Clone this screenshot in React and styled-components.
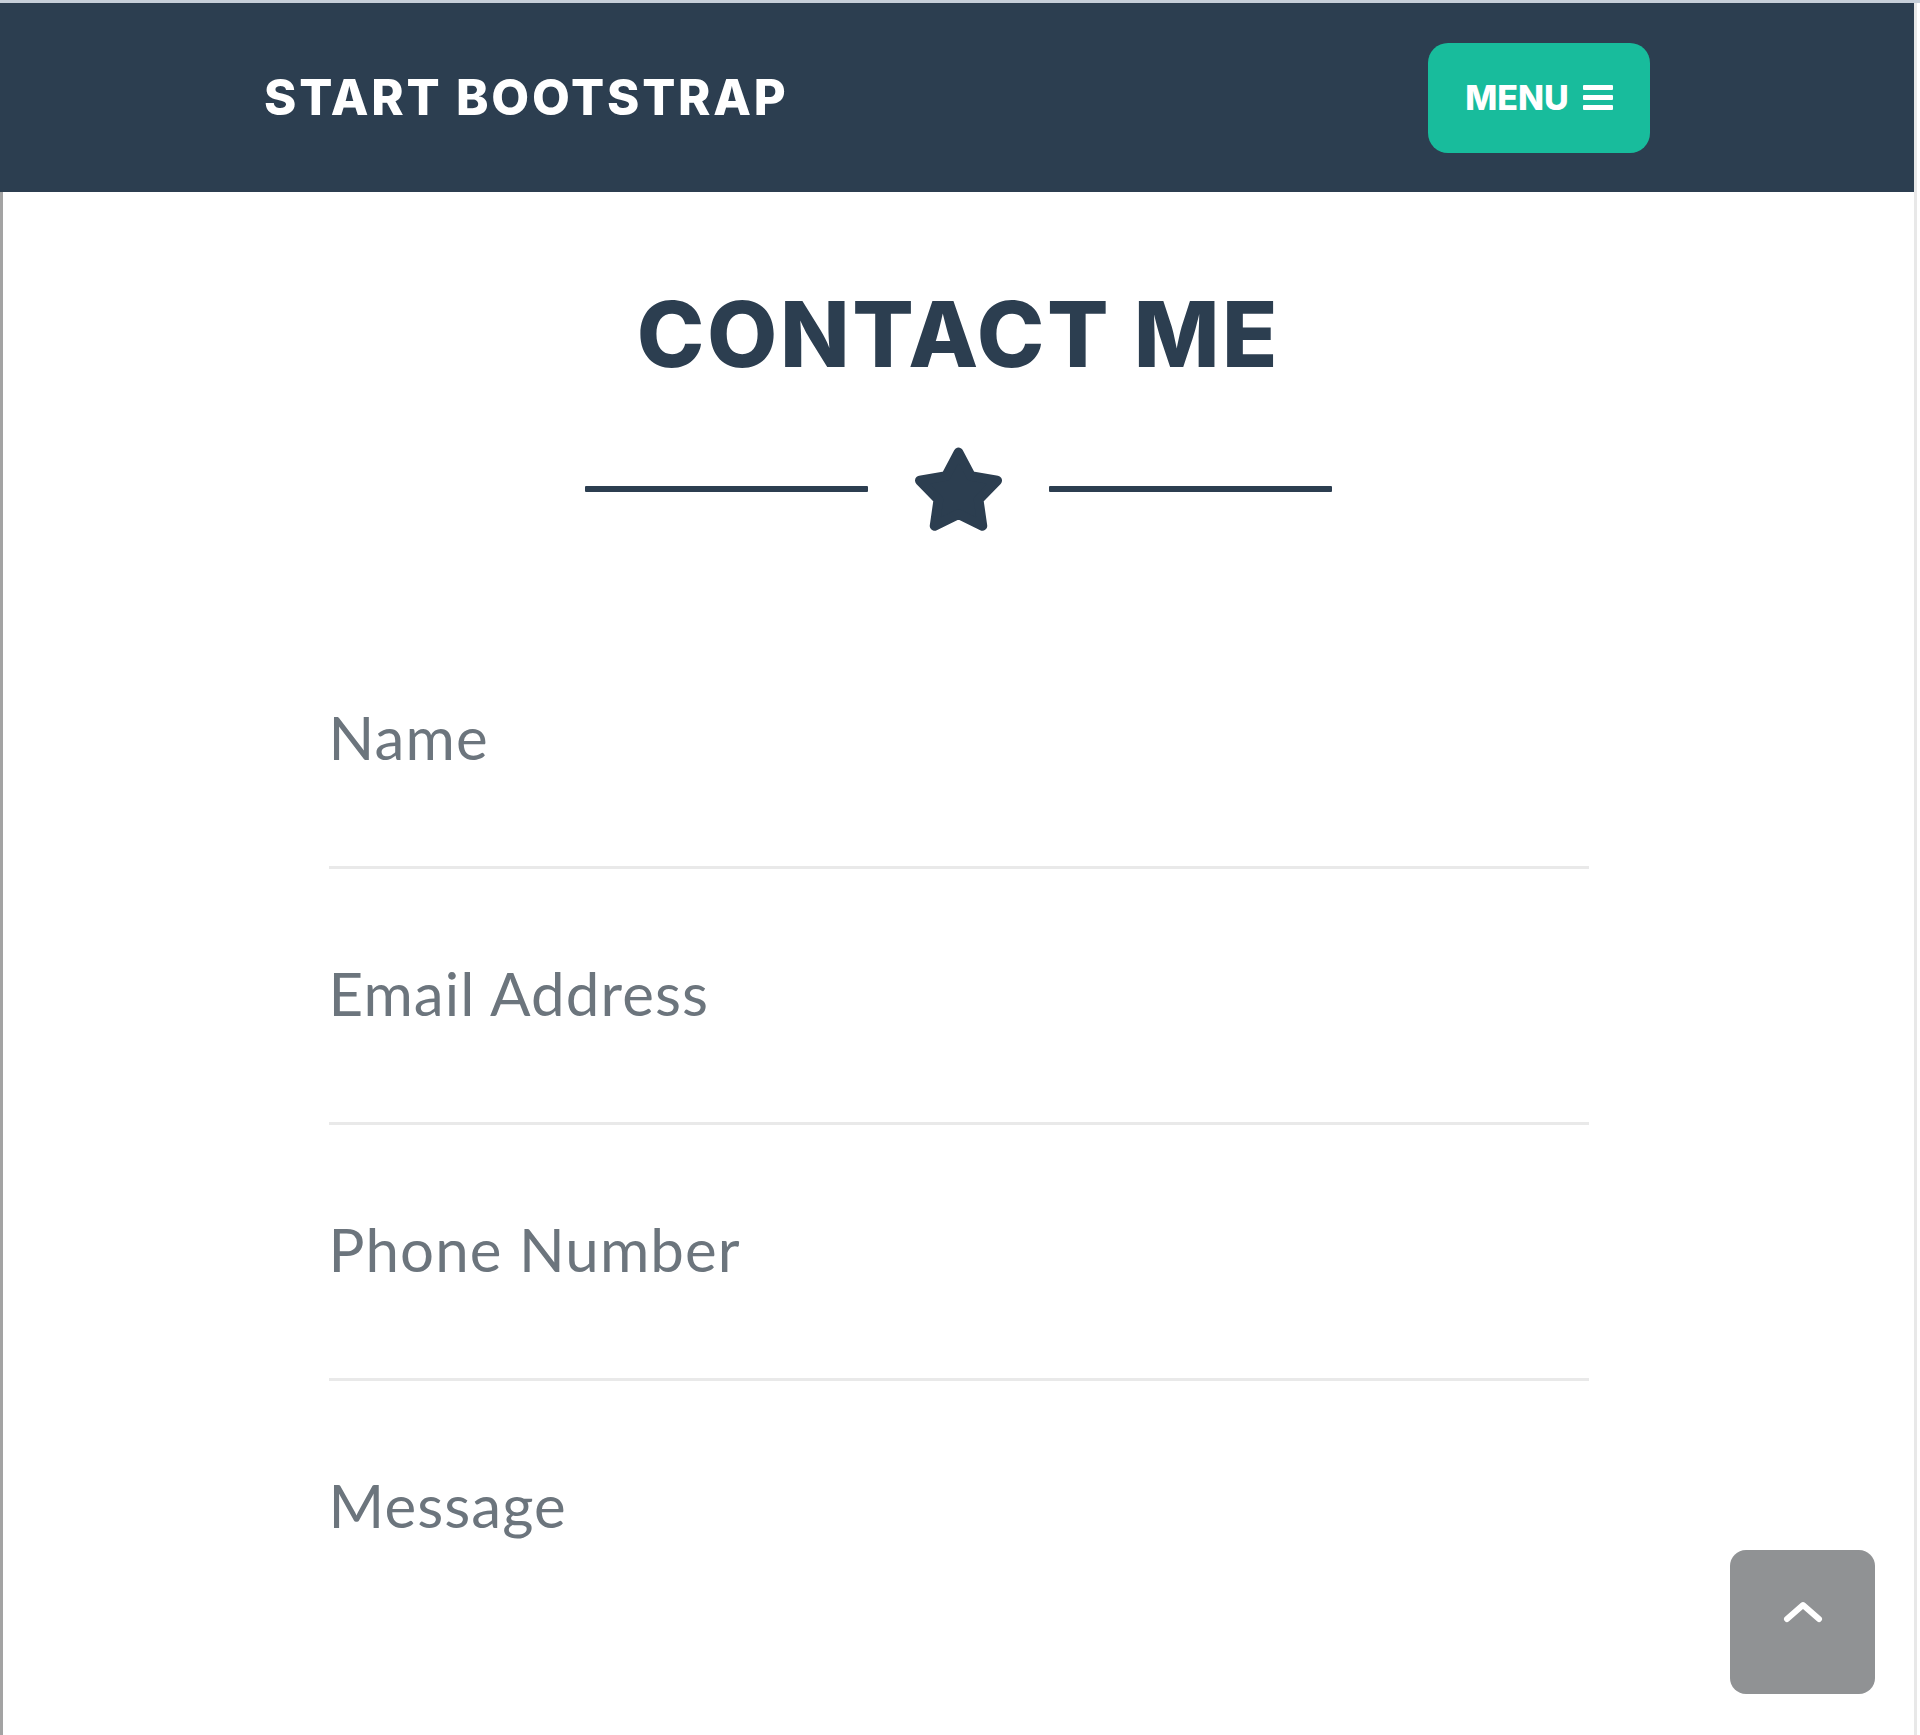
import React from "react";
import styled, { createGlobalStyle } from "styled-components";

const GlobalStyle = createGlobalStyle`
  html, body {
    margin: 0;
    padding: 0;
    overflow: hidden;
    background: #ffffff;
  }
  * { box-sizing: border-box; }
`;

const Frame = styled.div`
  width: 1920px;
  height: 1735px;
  display: flex;
  flex-direction: column;
  border-top: 3px solid #c7cfd9;
  overflow: hidden;
  position: relative;
`;

const Viewport = styled.div`
  flex: 1;
  display: flex;
  min-height: 0;
`;

const PageColumn = styled.div`
  flex: 1;
  display: flex;
  flex-direction: column;
  min-width: 0;
  min-height: 0;
`;

const ScrollRail = styled.div`
  width: 6px;
  background: #ffffff;
  border-left: 3px solid #e8e8e8;
`;

const Navbar = styled.nav`
  flex-shrink: 0;
  height: 189px;
  background: #2c3e50;
  display: flex;
  align-items: center;
`;

const NavContainer = styled.div`
  width: 1386px;
  margin: 0 auto;
  display: flex;
  align-items: center;
  justify-content: space-between;
`;

const Brand = styled.a`
  font-family: Inter, "Liberation Sans", sans-serif;
  font-weight: 800;
  font-size: 49px;
  line-height: 1;
  letter-spacing: 2.8px;
  color: #ffffff;
  text-transform: uppercase;
  text-decoration: none;
`;

const MenuButton = styled.button`
  width: 222px;
  height: 110px;
  border: none;
  border-radius: 20px;
  background: #18bc9c;
  color: #ffffff;
  display: flex;
  align-items: center;
  justify-content: center;
  gap: 14px;
  font-family: Inter, "Liberation Sans", sans-serif;
  font-weight: 800;
  font-size: 34px;
  line-height: 1;
  text-transform: uppercase;
  padding: 0;
`;

const Content = styled.section`
  flex: 1;
  min-height: 0;
  overflow: hidden;
  border-left: 3px solid #a3a3a3;
  padding-top: 97px;
  display: flex;
  flex-direction: column;
  align-items: center;
`;

const Heading = styled.h2`
  margin: 0;
  font-family: Inter, "Liberation Sans", sans-serif;
  font-weight: 800;
  font-size: 91px;
  line-height: 1;
  letter-spacing: 2.6px;
  color: #2c3e50;
  text-transform: uppercase;
  text-align: center;
`;

const Divider = styled.div`
  margin-top: 67px;
  display: flex;
  align-items: center;
  gap: 45px;
  flex-shrink: 0;
`;

const DividerLine = styled.span`
  display: block;
  width: 283px;
  height: 6px;
  border-radius: 1px;
  background: #2c3e50;
`;

const Form = styled.form`
  width: 1260px;
  margin-top: 82px;
  display: flex;
  flex-direction: column;
  flex-shrink: 0;
`;

const Field = styled.div`
  padding-top: 94px;
  padding-bottom: ${(p) => (p.$last ? "0" : "99px")};
  border-bottom: ${(p) => (p.$last ? "none" : "3px solid #e9e9e9")};
`;

const inputBase = `
  display: block;
  width: 100%;
  border: none;
  outline: none;
  padding: 0;
  margin: 0;
  background: transparent;
  font-family: Lato, "Open Sans", sans-serif;
  font-size: 60px;
  line-height: 60px;
  letter-spacing: 1.1px;
  color: #495057;
  &::placeholder {
    color: #6c757d;
    opacity: 1;
  }
`;

const Input = styled.input`
  ${inputBase}
  height: 60px;
`;

const TextArea = styled.textarea`
  ${inputBase}
  height: 400px;
  resize: none;
  overflow: hidden;
`;

const ScrollTop = styled.a`
  position: absolute;
  right: 45px;
  bottom: 41px;
  width: 145px;
  height: 144px;
  border-radius: 16px;
  background: rgba(33, 37, 41, 0.5);
  display: flex;
  align-items: center;
  justify-content: center;
  padding-bottom: 20px;
`;

const Star = () => (
  <svg width="91" height="84" viewBox="-6 -6 112 102" aria-hidden="true">
    <polygon
      points="50,0 65.28,28.96 97.55,34.55 74.73,58.03 79.39,90.45 50,76 20.61,90.45 25.27,58.03 2.45,34.55 34.72,28.96"
      fill="#2c3e50"
      stroke="#2c3e50"
      strokeWidth="12"
      strokeLinejoin="round"
    />
  </svg>
);

const Bars = () => (
  <svg width="30" height="25" viewBox="0 0 30 25" aria-hidden="true">
    <rect x="0" y="0" width="30" height="5" rx="1" fill="#ffffff" />
    <rect x="0" y="10" width="30" height="5" rx="1" fill="#ffffff" />
    <rect x="0" y="20" width="30" height="5" rx="1" fill="#ffffff" />
  </svg>
);

const Chevron = () => (
  <svg width="40" height="22" viewBox="0 0 40 22" aria-hidden="true">
    <polyline
      points="4,18 20,4 36,18"
      fill="none"
      stroke="#ffffff"
      strokeWidth="6"
      strokeLinecap="round"
      strokeLinejoin="round"
    />
  </svg>
);

export default function App() {
  return (
    <>
      <GlobalStyle />
      <Frame>
        <Viewport>
          <PageColumn>
            <Navbar>
              <NavContainer>
                <Brand href="#">Start Bootstrap</Brand>
                <MenuButton type="button">
                  Menu
                  <Bars />
                </MenuButton>
              </NavContainer>
            </Navbar>
            <Content>
              <Heading>Contact Me</Heading>
              <Divider>
                <DividerLine />
                <Star />
                <DividerLine />
              </Divider>
              <Form onSubmit={(e) => e.preventDefault()}>
                <Field>
                  <Input type="text" placeholder="Name" />
                </Field>
                <Field>
                  <Input type="email" placeholder="Email Address" />
                </Field>
                <Field>
                  <Input type="tel" placeholder="Phone Number" />
                </Field>
                <Field $last>
                  <TextArea placeholder="Message" />
                </Field>
              </Form>
            </Content>
          </PageColumn>
          <ScrollRail />
        </Viewport>
        <ScrollTop href="#">
          <Chevron />
        </ScrollTop>
      </Frame>
    </>
  );
}
